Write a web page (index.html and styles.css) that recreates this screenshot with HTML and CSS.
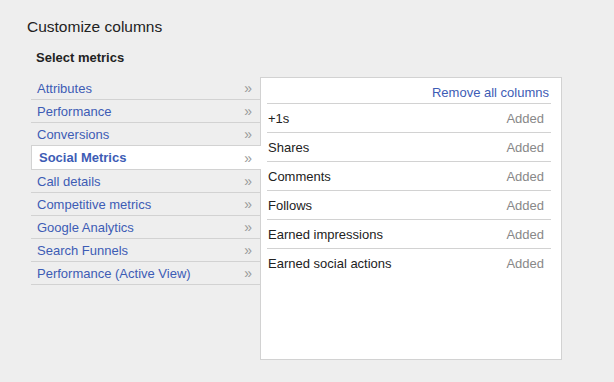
FILE: index.html
```html
<!DOCTYPE html>
<html lang="en">
<head>
    <meta charset="UTF-8">
    <meta name="viewport" content="width=device-width, initial-scale=1.0">
    <title>Customize columns</title>
    <link rel="stylesheet" href="styles.css">
</head>
<body>
    <div class="page">
        <h1>Customize columns</h1>
        <h2>Select metrics</h2>
        <div class="picker">
            <ul class="categories">
                <li>Attributes <span class="arrow">&raquo;</span></li>
                <li>Performance <span class="arrow">&raquo;</span></li>
                <li>Conversions <span class="arrow">&raquo;</span></li>
                <li class="selected">Social Metrics <span class="arrow">&raquo;</span></li>
                <li>Call details <span class="arrow">&raquo;</span></li>
                <li>Competitive metrics <span class="arrow">&raquo;</span></li>
                <li>Google Analytics <span class="arrow">&raquo;</span></li>
                <li>Search Funnels <span class="arrow">&raquo;</span></li>
                <li>Performance (Active View) <span class="arrow">&raquo;</span></li>
            </ul>
            <div class="metrics">
                <div class="metrics-head">
                    <a href="#">Remove all columns</a>
                </div>
                <div class="metric"><span>+1s</span><span class="added">Added</span></div>
                <div class="metric"><span>Shares</span><span class="added">Added</span></div>
                <div class="metric"><span>Comments</span><span class="added">Added</span></div>
                <div class="metric"><span>Follows</span><span class="added">Added</span></div>
                <div class="metric"><span>Earned impressions</span><span class="added">Added</span></div>
                <div class="metric"><span>Earned social actions</span><span class="added">Added</span></div>
            </div>
        </div>
    </div>
</body>
</html>
```

FILE: styles.css
```css
body {
    margin: 0;
    background-color: #eeeeee;
    font-family: "Liberation Sans", Arial, sans-serif;
    font-size: 13px;
    color: #222;
}
.page {
    padding: 17px 0 0 27px;
}
h1 {
    margin: 0;
    font-size: 15.5px;
    font-weight: normal;
    line-height: 19px;
    color: #222;
}
h2 {
    margin: 14px 0 0 9px;
    font-size: 13px;
    font-weight: bold;
    line-height: 16px;
    color: #222;
}
.picker {
    display: flex;
    align-items: flex-start;
    margin: 11px 0 0 4px;
}
.categories {
    list-style: none;
    margin: 0;
    padding: 0;
    width: 229px;
}
.categories li {
    display: flex;
    justify-content: space-between;
    align-items: center;
    height: 22px;
    padding: 0 8px 0 6px;
    border-bottom: 1px solid #d2d2d2;
    color: #3d5cb5;
}
.categories li.selected {
    position: relative;
    z-index: 1;
    margin-top: -1px;
    height: 23px;
    padding-left: 7px;
    margin-right: -1px;
    padding-right: 9px;
    background: #fff;
    border-top: 1px solid #d2d2d2;
    border-left: 1px solid #d2d2d2;
    font-weight: bold;
}
.arrow {
    color: #999;
    font-weight: normal;
    font-size: 14px;
}
.metrics {
    width: 284px;
    height: 281px;
    padding: 0 10px 0 6px;
    background: #fff;
    border: 1px solid #d2d2d2;
}
.metrics-head {
    display: flex;
    justify-content: flex-end;
    align-items: center;
    height: 25px;
    padding: 0 2px 0 0;
    border-bottom: 1px solid #d2d2d2;
}
.metrics-head a {
    color: #3d5cb5;
    text-decoration: none;
    position: relative;
    top: 2px;
}
.metric {
    display: flex;
    justify-content: space-between;
    align-items: center;
    height: 28px;
    padding: 0 7px 0 1px;
    border-bottom: 1px solid #d2d2d2;
}
.metric:last-child {
    border-bottom: none;
}
.added {
    color: #888;
}
```
